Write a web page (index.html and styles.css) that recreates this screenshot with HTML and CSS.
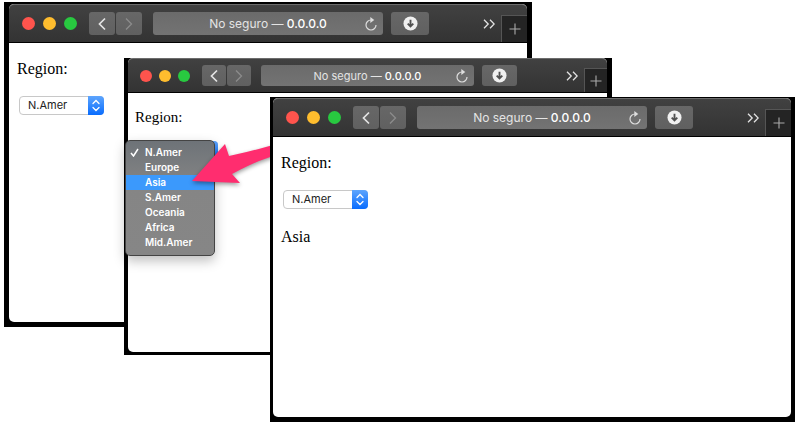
FILE: index.html
```html
<!DOCTYPE html>
<html lang="es">
<head>
<meta charset="utf-8">
<title>Region</title>
<link rel="stylesheet" href="styles.css">
</head>
<body>
<svg class="symbols" aria-hidden="true">
  <symbol id="back" viewBox="0 0 10 14"><path d="M8 1.5 2.5 7 8 12.5" fill="none" stroke="currentColor" stroke-width="1.7"/></symbol>
  <symbol id="forward" viewBox="0 0 10 14"><path d="M2 1.5 7.5 7 2 12.5" fill="none" stroke="currentColor" stroke-width="1.3"/></symbol>
  <symbol id="reload" viewBox="0 0 14 14"><path d="M8.3 3H7a5 5 0 1 0 5 5" fill="none" stroke="currentColor" stroke-width="1.2"/><path d="M6.3 0v6l4-3z" fill="currentColor"/></symbol>
  <symbol id="download" viewBox="0 0 16 16"><circle cx="8" cy="8" r="7.5" fill="#f0f0f0"/><path d="M8 4v7M5 8.2l3 3 3-3" fill="none" stroke="#505050" stroke-width="2"/></symbol>
  <symbol id="more" viewBox="0 0 12 10"><path d="m1 .8 4.2 4.2L1 9.200M7 .8 11.200 5 7 9.200" fill="none" stroke="currentColor" stroke-width="1.3"/></symbol>
  <symbol id="plus" viewBox="0 0 12 12"><path d="M6 .5v11M.5 6h11" fill="none" stroke="currentColor" stroke-width="1.1"/></symbol>
</svg>
<main class="desktop">
  <section class="frame frame-first">
    <div class="window">
      <header class="toolbar">
        <div class="lights"><i class="light red"></i><i class="light yellow"></i><i class="light green"></i></div>
        <nav class="nav">
          <button class="tool" aria-label="Atrás"><svg class="chevron"><use href="#back"/></svg></button>
          <button class="tool dim" aria-label="Adelante"><svg class="chevron"><use href="#forward"/></svg></button>
        </nav>
        <div class="address"><span class="url">No seguro — <b>0.0.0.0</b></span><button class="reload" aria-label="Recargar"><svg><use href="#reload"/></svg></button></div>
        <button class="tool download" aria-label="Descargas"><svg><use href="#download"/></svg></button>
        <button class="more" aria-label="Más"><svg><use href="#more"/></svg></button>
        <button class="new-tab" aria-label="Nueva pestaña"><svg><use href="#plus"/></svg></button>
      </header>
      <div class="page">
        <label class="label" for="region-1">Region:</label>
        <div class="picker">
          <select id="region-1" class="select"><option>N.Amer</option><option>Europe</option><option>Asia</option></select>
          <svg class="stepper" viewBox="0 0 16 19"><path d="m5 7.500 3-3 3 3M5 11.500l3 3 3-3"/></svg>
        </div>
      </div>
    </div>
  </section>

  <section class="frame frame-second">
    <div class="window">
      <header class="toolbar">
        <div class="lights"><i class="light red"></i><i class="light yellow"></i><i class="light green"></i></div>
        <nav class="nav">
          <button class="tool" aria-label="Atrás"><svg class="chevron"><use href="#back"/></svg></button>
          <button class="tool dim" aria-label="Adelante"><svg class="chevron"><use href="#forward"/></svg></button>
        </nav>
        <div class="address"><span class="url">No seguro — <b>0.0.0.0</b></span><button class="reload" aria-label="Recargar"><svg><use href="#reload"/></svg></button></div>
        <button class="tool download" aria-label="Descargas"><svg><use href="#download"/></svg></button>
        <button class="more" aria-label="Más"><svg><use href="#more"/></svg></button>
        <button class="new-tab" aria-label="Nueva pestaña"><svg><use href="#plus"/></svg></button>
      </header>
      <div class="page">
        <span class="label">Region:</span>
        <div class="picker">
          <button class="select" aria-label="Region" aria-expanded="true"></button>
          <svg class="stepper" viewBox="0 0 16 19"></svg>
          <div class="menu" role="listbox" aria-label="Region">
            <button class="option" role="option" aria-selected="true"><svg class="check" viewBox="0 0 9 9"><path d="m1 5 2.500 3L8 1"/></svg>N.Amer</button>
            <button class="option" role="option">Europe</button>
            <button class="option active" role="option">Asia</button>
            <button class="option" role="option">S.Amer</button>
            <button class="option" role="option">Oceania</button>
            <button class="option" role="option">Africa</button>
            <button class="option" role="option">Mid.Amer</button>
          </div>
        </div>
      </div>
    </div>
    <svg class="arrow" viewBox="0 0 84 46" aria-hidden="true"><path d="M1 38 34 1l4 12q20-4 44-11v11q-19 6-41 18l8 9Z"/></svg>
  </section>

  <section class="frame frame-third">
    <div class="window">
      <header class="toolbar">
        <div class="lights"><i class="light red"></i><i class="light yellow"></i><i class="light green"></i></div>
        <nav class="nav">
          <button class="tool" aria-label="Atrás"><svg class="chevron"><use href="#back"/></svg></button>
          <button class="tool dim" aria-label="Adelante"><svg class="chevron"><use href="#forward"/></svg></button>
        </nav>
        <div class="address"><span class="url">No seguro — <b>0.0.0.0</b></span><button class="reload" aria-label="Recargar"><svg><use href="#reload"/></svg></button></div>
        <button class="tool download" aria-label="Descargas"><svg><use href="#download"/></svg></button>
        <button class="more" aria-label="Más"><svg><use href="#more"/></svg></button>
        <button class="new-tab" aria-label="Nueva pestaña"><svg><use href="#plus"/></svg></button>
      </header>
      <div class="page">
        <label class="label" for="region-3">Region:</label>
        <div class="picker">
          <select id="region-3" class="select"><option>N.Amer</option><option>Europe</option><option>Asia</option></select>
          <svg class="stepper" viewBox="0 0 16 19"><path d="m5 7.500 3-3 3 3M5 11.500l3 3 3-3"/></svg>
        </div>
        <p class="result">Asia</p>
      </div>
    </div>
  </section>
</main>
</body>
</html>
```
FILE: styles.css
```css
* { box-sizing: border-box; }
body { margin: 0; background: #fff; }
button { margin: 0; padding: 0; border: 0; background: none; color: inherit; font: inherit; }
svg { display: block; }
.symbols { position: absolute; width: 0; height: 0; }

.desktop { position: relative; height: 100vh; overflow: hidden; }

/* Overlapping windows on the desktop */
.frame {
  --bar: 39px; --light: 13px; --gap: 8px; --tool-w: 26px; --tool-h: 23px;
  --download-w: 38px; --more-gap: 54px; --pad: 13px; --url: 13px; --text: 16px;
  position: absolute; display: flex; background: #000;
}
.frame-first { left: 4px; right: 266px; top: 2px; bottom: 97px; padding: 2px 5px 5px; }
.frame-second {
  --bar: 35px; --light: 12px; --gap: 7px; --tool-w: 24px; --tool-h: 21px;
  --download-w: 35px; --more-gap: 49px; --pad: 12px; --url: 12px; --text: 15px;
  left: 124px; right: 186px; top: 58px; bottom: 69px; padding: 0 5px 3px 4px;
}
.frame-third { left: 270px; right: 3px; top: 97px; bottom: 2px; padding: 1px 4px 5px 3px; }
.window { flex: 1; display: flex; flex-direction: column; background: #fff; border-radius: 5px; }

.toolbar {
  display: flex; align-items: center; flex: none; height: var(--bar); padding-left: var(--pad);
  background: linear-gradient(#414141, #333); color: #e4e4e4;
  border-top: 1px solid #6c6c6c; border-bottom: 1px solid #000; border-radius: 5px 5px 0 0;
}
.lights { display: flex; gap: var(--gap); margin-right: 12px; }
.light { width: var(--light); height: var(--light); border-radius: 50%; }
.red { background: #ff544d; }
.yellow { background: #ffbd2e; }
.green { background: #28c940; }
.nav { display: flex; gap: 1px; margin-right: 11px; }
.frame-second .nav { margin-right: 10px; }
.tool {
  display: flex; align-items: center; justify-content: center;
  width: var(--tool-w); height: var(--tool-h); border-radius: 3px;
  background: linear-gradient(#676767, #606060);
}
.dim { color: #8c8c8c; }
.chevron { width: 10px; height: 14px; }
.address {
  flex: 1; min-width: 0; display: grid; align-items: center; height: var(--tool-h);
  border-radius: 3px; background: linear-gradient(#6b6b6b, #737373);
  font: 400 var(--url)/16px Inter, sans-serif;
}
.url, .reload { grid-area: 1 / 1; }
.url { justify-self: center; white-space: nowrap; font-size: 12px; }
.frame-second .url { font-size: 11px; }
.url b { font-weight: 500; color: #fff; }
.reload { justify-self: end; margin-right: 5px; color: #ddd; }
.reload svg { width: 14px; height: 14px; }
.download { width: var(--download-w); margin-left: 8px; }
.download svg { width: 15px; height: 15px; }
.more { margin: 0 6px 0 var(--more-gap); }
.more svg { width: 12px; height: 10px; }
.new-tab {
  align-self: flex-end; display: grid; place-items: center; width: var(--tool-w); height: calc(var(--bar) - 12px);
  background: #242424; border: 1px solid #555; border-width: 1px 0 0 1px; color: #aaa;
}
.frame-second .new-tab { width: 23px; height: 24px; }
.new-tab svg { width: 12px; height: 12px; }

.page { padding: 16px 8px; font: var(--text)/20px "Liberation Serif", serif; color: #000; }
.frame-second .page { padding: 14px 7px; }
.label { display: block; }
.picker { position: relative; width: 85px; margin: 17px 0 0 2px; }
.select {
  appearance: none; display: block; width: 100%; height: 19px; margin: 0; padding: 0 20px 0 8px;
  border: 1px solid #c8c8c8; border-radius: 4px; background: #fff; color: #222;
  font: 11px/17px Inter, sans-serif;
}
.stepper {
  position: absolute; right: 0; top: 0; width: 16px; height: 19px; border-radius: 0 4px 4px 0;
  background: linear-gradient(#5ea5fd, #086cfe); pointer-events: none;
}
.stepper path { fill: none; stroke: #fff; stroke-width: 1.3; stroke-linecap: round; }
.frame-second .picker { width: 80px; margin: 14px 0 0 3px; }
.result { margin: 18px 0 0; }

/* Open list, laid over its drop-down */
.menu {
  position: absolute; left: -13px; top: -1px; width: 90px; padding: 4px 0 5px;
  border: 1px solid #444; border-radius: 5px; background: linear-gradient(#6e7378, #858585 40%, #868686);
  box-shadow: 0 5px 12px rgb(0 0 0 / 25%); color: #fff;
}
.option {
  position: relative; display: block; width: 100%; height: 15px; padding-left: 19px;
  text-align: left; font: 600 10px/15px Inter, sans-serif;
}
.active { background: #3b99fc; }
.check { position: absolute; left: 4px; top: 3px; width: 9px; height: 9px; }
.check path { fill: none; stroke: #fff; stroke-width: 1.5; }
.arrow {
  position: absolute; left: 67px; top: 85px; width: 84px; height: 46px;
  fill: #ff2d6f; filter: drop-shadow(0 2px 2px rgb(0 0 0 / 40%));
}
```
